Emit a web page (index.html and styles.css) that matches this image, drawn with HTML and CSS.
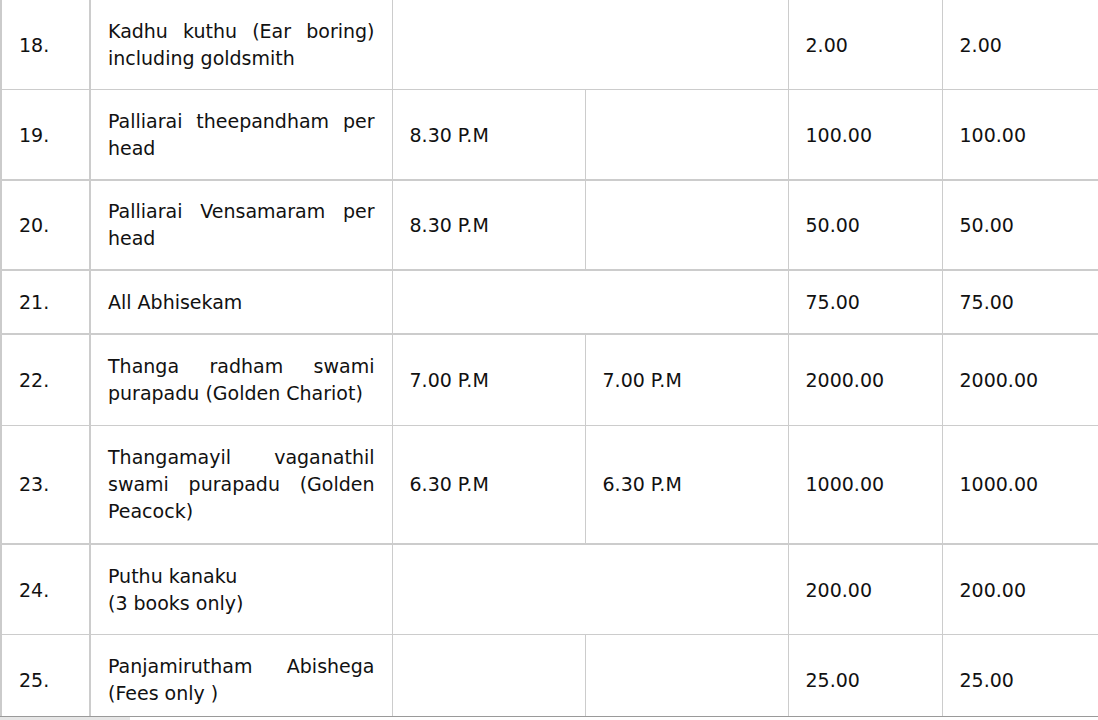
FILE: index.html
```html
<!DOCTYPE html>
<html>
<head>
<meta charset="utf-8">
<link rel="stylesheet" href="styles.css">
</head>
<body>
<table class="fees">
  <colgroup>
    <col class="c-no"><col class="c-name"><col class="c-t1"><col class="c-t2"><col class="c-f1"><col class="c-f2">
  </colgroup>
  <tbody>
    <tr>
      <td class="no">18.</td>
      <td class="name">Kadhu kuthu (Ear boring) including goldsmith</td>
      <td colspan="2"></td>
      <td>2.00</td>
      <td>2.00</td>
    </tr>
    <tr>
      <td class="no">19.</td>
      <td class="name">Palliarai theepandham per head</td>
      <td>8.30 P.M</td>
      <td></td>
      <td>100.00</td>
      <td>100.00</td>
    </tr>
    <tr class="thick">
      <td class="no">20.</td>
      <td class="name">Palliarai Vensamaram per head</td>
      <td>8.30 P.M</td>
      <td></td>
      <td>50.00</td>
      <td>50.00</td>
    </tr>
    <tr class="thick roomy">
      <td class="no">21.</td>
      <td class="name">All Abhisekam</td>
      <td colspan="2"></td>
      <td>75.00</td>
      <td>75.00</td>
    </tr>
    <tr class="thick roomy tall">
      <td class="no">22.</td>
      <td class="name">Thanga radham swami purapadu (Golden Chariot)</td>
      <td>7.00 P.M</td>
      <td>7.00 P.M</td>
      <td>2000.00</td>
      <td>2000.00</td>
    </tr>
    <tr class="tall">
      <td class="no">23.</td>
      <td class="name">Thangamayil vaganathil swami purapadu (Golden Peacock)</td>
      <td>6.30 P.M</td>
      <td>6.30 P.M</td>
      <td>1000.00</td>
      <td>1000.00</td>
    </tr>
    <tr class="thick roomy">
      <td class="no">24.</td>
      <td class="name left">Puthu kanaku<br>(3 books only)</td>
      <td colspan="2"></td>
      <td>200.00</td>
      <td>200.00</td>
    </tr>
    <tr>
      <td class="no">25.</td>
      <td class="name">Panjamirutham Abishega (Fees only )</td>
      <td></td>
      <td></td>
      <td>25.00</td>
      <td>25.00</td>
    </tr>
  </tbody>
</table>
<div class="hscroll"><div class="thumb"></div></div>
</body>
</html>
```

FILE: styles.css
```css
html, body {
  margin: 0;
  padding: 0;
  background: #ffffff;
  overflow: hidden;
}

body {
  font-family: "DejaVu Sans", Verdana, sans-serif;
  font-size: 19px;
  line-height: 27px;
  color: #111111;
}

.fees {
  border-collapse: collapse;
  table-layout: fixed;
  width: 1098px;
  margin-top: -1px;
  border-left: 2px solid #cbcbcb;
  border-right: 2px solid #cbcbcb;
}

.c-no { width: 89px; }
.c-name { width: 302px; }
.c-t1 { width: 193px; }
.c-t2 { width: 203px; }
.c-f1 { width: 154px; }
.c-f2 { width: 157px; }

.fees td {
  border: 1px solid #cccccc;
  padding: 18px 17px 17px 17px;
  vertical-align: middle;
  text-align: left;
}

.fees tr.thick td {
  border-top: 2px solid #cccccc;
  padding-top: 17px;
}

.fees tr.roomy td {
  padding-top: 18px;
}

.fees tr.tall td {
  padding-bottom: 18px;
}

.fees td.no {
  border-right: 2px solid #cccccc;
}

.fees td.name {
  text-align: justify;
}

.fees td.name.left {
  text-align: left;
}

.hscroll {
  position: fixed;
  left: 0;
  right: 0;
  bottom: 0;
  height: 3px;
  border-top: 1px solid #9a9a9a;
  background: #ffffff;
}

.hscroll .thumb {
  width: 130px;
  height: 3px;
  background: #e6e6e6;
}
```
